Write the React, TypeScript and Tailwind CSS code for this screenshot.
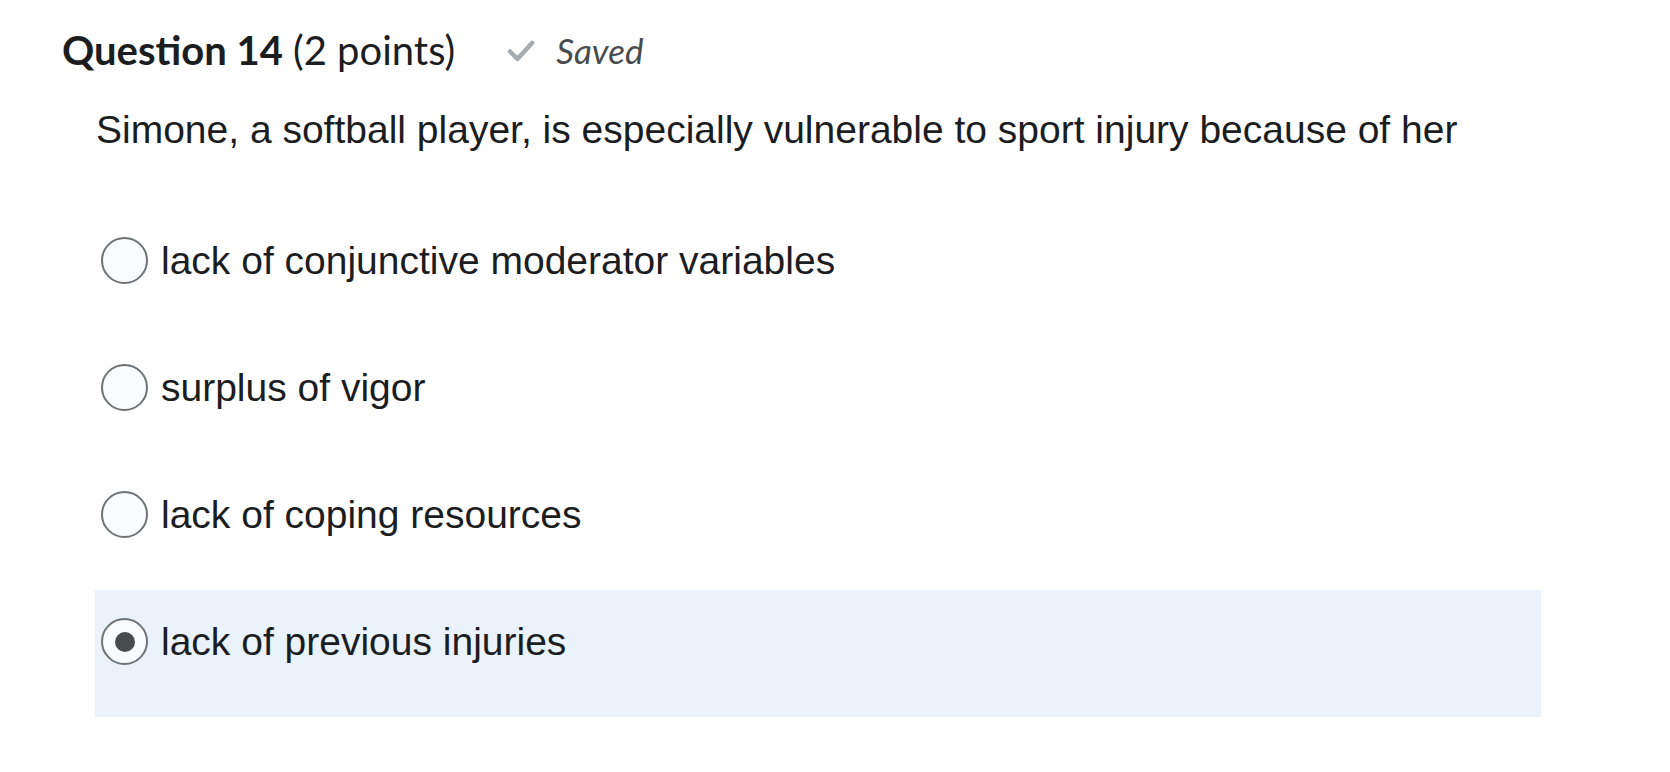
import React from "react";

const options = [
  "lack of conjunctive moderator variables",
  "surplus of vigor",
  "lack of coping resources",
  "lack of previous injuries",
];

function Radio({ checked }: { checked: boolean }) {
  return (
    <span className="flex h-[47px] w-[47px] shrink-0 items-center justify-center rounded-full border-2 border-[#6e7376] bg-[#f9fbff]">
      {checked && <span className="h-[20px] w-[20px] rounded-full bg-[#494c4e]" />}
    </span>
  );
}

export default function App() {
  const selected = 3;
  return (
    <div className="h-[772px] w-full bg-white text-[#1c1d1f]">
      <div className="flex items-baseline pl-[62px] pt-[24px] font-['Lato',sans-serif] text-[40px] leading-[52px]">
        <span className="font-bold">Question 14</span>
        <span className="ml-[10px] font-normal">(2 points)</span>
        <span className="ml-[52px] flex items-center self-center">
          <svg width="28" height="23" viewBox="0 0 28 23" className="mr-[21px]">
            <path d="M3 12.5 L10.5 20 L25 4" fill="none" stroke="#a7acb0" strokeWidth="4.5" strokeLinecap="round" strokeLinejoin="round" />
          </svg>
          <span className="text-[35px] italic text-[#494c4e]">Saved</span>
        </span>
      </div>
      <p className="pl-[96px] pt-[30px] font-['Liberation_Sans',Arial,sans-serif] text-[39px] leading-[48px]">
        Simone, a softball player, is especially vulnerable to sport injury because of her
      </p>
      <div className="ml-[95px] mt-[55px] w-[1446px] font-['Liberation_Sans',Arial,sans-serif]">
        {options.map((o, i) => (
          <div
            key={o}
            className={`h-[127px] pl-[6px] pt-[28px] ${i === selected ? "bg-[#eaf2fc]" : ""}`}
          >
            <label className="flex items-center gap-[13px] text-[39px] leading-[46px]">
              <Radio checked={i === selected} />
              <span>{o}</span>
            </label>
          </div>
        ))}
      </div>
    </div>
  );
}
